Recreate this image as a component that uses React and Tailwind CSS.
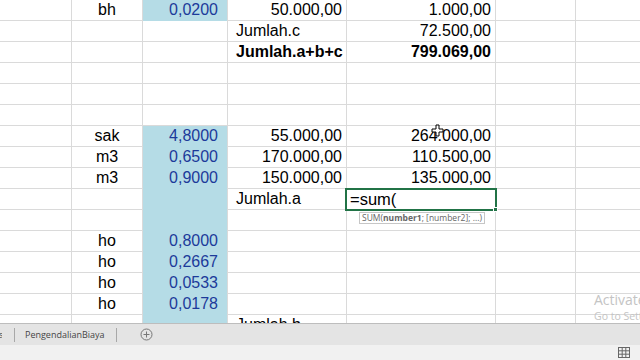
import React from "react"

const BLUE_ROWS = [0, 6, 7, 8, 9, 10, 11, 12, 13, 14, 15]

const rows = [
  { b: "bh", c: "0,0200", d: "50.000,00", e: "1.000,00" },
  { dl: "Jumlah.c", e: "72.500,00" },
  { dl: "Jumlah.a+b+c", e: "799.069,00", bold: true },
  {},
  {},
  {},
  { b: "sak", c: "4,8000", d: "55.000,00", e: "264.000,00" },
  { b: "m3", c: "0,6500", d: "170.000,00", e: "110.500,00" },
  { b: "m3", c: "0,9000", d: "150.000,00", e: "135.000,00" },
  { dl: "Jumlah.a" },
  {},
  { b: "ho", c: "0,8000" },
  { b: "ho", c: "0,2667" },
  { b: "ho", c: "0,0533" },
  { b: "ho", c: "0,0178" },
  { dl: "Jumlah.b" },
]

function Row({ row, index }) {
  const blue = BLUE_ROWS.includes(index)
  const weight = row.bold ? "font-bold" : ""
  return (
    <div className="flex h-[21px] text-[16px] leading-[20px] text-black">
      <div className="w-[72px] shrink-0 border-r border-b border-[#dadada]"></div>
      <div className="w-[71px] shrink-0 border-r border-b border-[#dadada] text-center">
        {row.b}
      </div>
      <div
        className={
          blue
            ? "w-[85px] shrink-0 bg-[#b5dce6] text-right pr-[9px] text-[#1c3a9a] border-r border-[#dadada]"
            : "w-[85px] shrink-0 border-r border-b border-[#dadada]"
        }
      >
        {row.c}
      </div>
      <div
        className={`w-[119px] shrink-0 border-r border-b border-[#dadada] whitespace-nowrap ${weight} ${
          row.dl ? "text-left pl-2" : "text-right pr-1"
        }`}
      >
        {row.dl || row.d}
      </div>
      <div className={`w-[149px] shrink-0 border-r border-b border-[#dadada] text-right pr-1 ${weight}`}>
        {row.e}
      </div>
      <div className="w-[80px] shrink-0 border-r border-b border-[#dadada]"></div>
      <div className="flex-1 border-b border-[#dadada]"></div>
    </div>
  )
}

export default function App() {
  return (
    <div className="relative w-[640px] h-[360px] overflow-hidden bg-white font-['Liberation_Sans',Arial,sans-serif]">
      {/* Sheet grid */}
      <div className="h-[323px] overflow-hidden">
        {rows.map((row, i) => (
          <Row key={i} row={row} index={i} />
        ))}
      </div>

      {/* Active cell */}
      <div className="absolute left-[345px] top-[188px] w-[152px] h-[23px] border-2 border-[#217346] bg-white pl-[3px] text-[16.5px] leading-[19px] text-black">
        =sum(
        <div className="absolute -right-[3px] -bottom-[3px] w-[5px] h-[5px] bg-[#217346] border border-white"></div>
      </div>

      {/* Function tooltip */}
      <div className="absolute left-[359px] top-[212px] h-[12px] px-[2px] border border-[#c6c6c6] bg-white text-[8.5px] leading-[10px] text-[#666] font-['Open_Sans',sans-serif] whitespace-nowrap">
        SUM(<span className="font-bold">number1</span>; [number2]; ...)
      </div>

      {/* Move cursor */}
      <svg className="absolute left-[431px] top-[124px]" width="13" height="13" viewBox="0 0 13 13">
        <path
          d="M5 1h3v4h4v3H8v4H5V8H1V5h4z"
          fill="white"
          stroke="black"
          strokeWidth="1"
        />
      </svg>

      {/* Activate Windows watermark */}
      <div className="absolute left-[594px] top-[291px] text-[#c4c4c4] font-['Open_Sans',sans-serif] whitespace-nowrap">
        <div className="text-[14px] leading-[18px]">Activate Windows</div>
        <div className="text-[10.5px] leading-[14px]">Go to Settings to activate Windows.</div>
      </div>

      {/* Sheet tabs */}
      <div className="absolute left-0 top-[323px] w-full h-[22px] bg-[#e4e4e4] border-t border-[#bdbdbd] flex items-center text-[9px] text-[#444] font-['Open_Sans',sans-serif]">
        <span className="-ml-[1px] w-[3px] overflow-hidden">s</span>
        <div className="ml-[12px] w-px h-[14px] bg-[#a8a8a8]"></div>
        <span className="ml-[10px]">PengendalianBiaya</span>
        <div className="ml-[11px] w-px h-[14px] bg-[#a8a8a8]"></div>
        <svg className="ml-[23px]" width="13" height="13" viewBox="0 0 13 13">
          <circle cx="6.5" cy="6.5" r="5.5" fill="none" stroke="#777" strokeWidth="1" />
          <path d="M6.5 3.5v6M3.5 6.5h6" stroke="#777" strokeWidth="1" />
        </svg>
      </div>

      {/* Status bar */}
      <div className="absolute left-0 top-[345px] w-full h-[15px] bg-[#f1f1f1] flex items-center justify-end pr-[10px]">
        <svg width="12" height="11" viewBox="0 0 12 11">
          <rect x="0.5" y="0.5" width="11" height="10" fill="none" stroke="#666" />
          <path d="M4.2 0.5v10M7.8 0.5v10M0.5 3.8h11M0.5 7.2h11" stroke="#666" strokeWidth="1" />
        </svg>
      </div>
    </div>
  )
}
